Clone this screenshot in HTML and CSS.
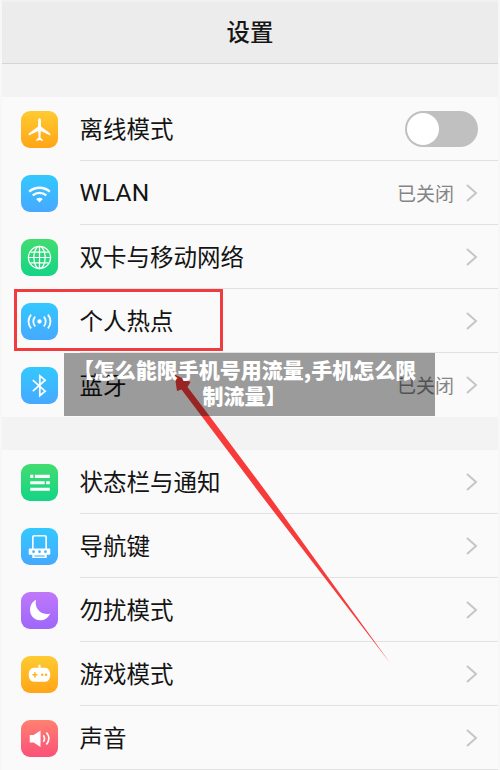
FILE: index.html
```html
<!DOCTYPE html>
<html lang="zh-CN">
<head>
<meta charset="utf-8">
<title>设置</title>
<link rel="stylesheet" href="styles.css">
</head>
<body>
<main class="screen">
  <header class="header"><h1 class="title">设置</h1></header>
  <section class="group">
    <div class="row">
      <span class="icon yellow"><svg viewBox="0 0 36 36"><path d="M18 7c1 0 1.400 1 1.400 2.500v5.500L28.500 22v1.800L19.300 19.500l-.4 6.500 2.300 2v1.200l-3.200-.9-3.200.9V28l2.300-2-.4-6.500L7.500 23.800V22L16.600 15V9.500C16.600 8 17 7 18 7z" fill="#fff"/></svg></span>
      <div class="body"><span class="label">离线模式</span><span class="toggle"><span class="knob"></span></span></div>
    </div>
    <div class="row">
      <span class="icon blue"><svg viewBox="0 0 36 36" fill="none" stroke="#fff" stroke-width="2.300"><path d="M8 16.200c5.800-5 14.200-5 20 0M11.400 19.900c3.900-3.300 9.300-3.300 13.200 0"/><path d="M14.800 23.300c2-1.500 4.400-1.500 6.400 0L18 26.800z" fill="#fff" stroke="none"/></svg></span>
      <div class="body"><span class="label latin">WLAN</span><span class="value">已关闭</span><svg class="chevron" viewBox="0 0 12 20"><path d="M1 2l9 8-9 8"/></svg></div>
    </div>
    <div class="row">
      <span class="icon green"><svg viewBox="0 0 36 36" fill="none" stroke="#fff" stroke-width="1.200"><circle cx="18" cy="18" r="10.800"/><ellipse cx="18" cy="18" rx="5.500" ry="10.800"/><path d="M18 7.200v21.600M7.200 18h21.600M9 12.800h18M9 23.200h18"/></svg></span>
      <div class="body"><span class="label">双卡与移动网络</span><svg class="chevron" viewBox="0 0 12 20"><path d="M1 2l9 8-9 8"/></svg></div>
    </div>
    <div class="row">
      <span class="icon blue"><svg viewBox="0 0 36 36" fill="none" stroke="#fff" stroke-width="1.800"><circle cx="18" cy="18" r="2.100" fill="#fff" stroke="none"/><path d="M13.800 13.300c-2.400 2.800-2.400 6.600 0 9.400M22.200 13.300c2.400 2.800 2.400 6.600 0 9.400M9.800 11.300c-3.300 4-3.300 9.400 0 13.400M26.200 11.300c3.300 4 3.300 9.400 0 13.400"/></svg></span>
      <div class="body"><span class="label">个人热点</span><svg class="chevron" viewBox="0 0 12 20"><path d="M1 2l9 8-9 8"/></svg></div>
    </div>
    <div class="row">
      <span class="icon blue"><svg viewBox="0 0 36 36" fill="none" stroke="#fff" stroke-width="1.700"><path d="M11.500 12.800l12 10.700-5.200 4.300V8.500l5.200 4.300-12 10.700"/></svg></span>
      <div class="body last"><span class="label">蓝牙</span><span class="value">已关闭</span><svg class="chevron" viewBox="0 0 12 20"><path d="M1 2l9 8-9 8"/></svg></div>
    </div>
  </section>
  <section class="group">
    <div class="row">
      <span class="icon green"><svg viewBox="0 0 36 36" fill="#fff"><path d="M9 10.500h3v3H9zM13.500 10.500H28v3H13.500zM9 16.800h14v3H9zM24.500 16.800H28v3h-3.500zM9 23h19v3H9z"/></svg></span>
      <div class="body"><span class="label">状态栏与通知</span><svg class="chevron" viewBox="0 0 12 20"><path d="M1 2l9 8-9 8"/></svg></div>
    </div>
    <div class="row">
      <span class="icon blue"><svg viewBox="0 0 36 36"><path d="M11.500 20.500V9q0-1.500 1.500-1.500h10q1.500 0 1.500 1.500v11.500" fill="none" stroke="#fff" stroke-width="1.600"/><path d="M8.500 20h19q1 0 1 1v4q0 1-1 1H25v3.300H11V26h-2.500q-1 0-1-1v-4q0-1 1-1z" fill="#fff"/><path d="M13 26.700h10v1.100H13z" fill="#3fb5ff"/><circle cx="12.200" cy="23" r="1.300" fill="#3fb5ff"/><circle cx="18" cy="23" r="1.300" fill="#3fb5ff"/><circle cx="23.800" cy="23" r="1.300" fill="#3fb5ff"/></svg></span>
      <div class="body"><span class="label">导航键</span><svg class="chevron" viewBox="0 0 12 20"><path d="M1 2l9 8-9 8"/></svg></div>
    </div>
    <div class="row">
      <span class="icon purple"><svg viewBox="0 0 36 36"><path d="M14.700 7.500C12.500 15 19 23.500 28.500 20.800 26.500 25.300 22.500 27.500 18.500 27.500 13 27.500 8.800 23 8.800 17.500 8.800 13 11 9.300 14.700 7.500z" fill="#fff"/></svg></span>
      <div class="body"><span class="label">勿扰模式</span><svg class="chevron" viewBox="0 0 12 20"><path d="M1 2l9 8-9 8"/></svg></div>
    </div>
    <div class="row">
      <span class="icon yellow"><svg viewBox="0 0 36 36"><path d="M17 8.500h2v3h4.500c3 0 5 3 5 6.700 0 4-2 6.800-5 6.800h-11c-3 0-5-2.800-5-6.800 0-3.700 2-6.700 5-6.700H17z" fill="#fff"/><path d="M11 18.300h5M13.500 15.800v5" stroke="#ffb51c" stroke-width="1.500"/><circle cx="20.700" cy="18.300" r="1.200" fill="#ffb51c"/><circle cx="24.300" cy="18.300" r="1.200" fill="#ffb51c"/></svg></span>
      <div class="body"><span class="label">游戏模式</span><svg class="chevron" viewBox="0 0 12 20"><path d="M1 2l9 8-9 8"/></svg></div>
    </div>
    <div class="row">
      <span class="icon coral"><svg viewBox="0 0 36 36"><path d="M8.500 14.500h3.800L19 10.300v15.900l-6.700-4.200H8.500z" fill="#fff"/><path d="M21.700 14.800c1.500 2 1.500 4.400 0 6.400M24.700 12.200c3.100 3.600 3.100 8 0 11.600" fill="none" stroke="#fff" stroke-width="1.600"/></svg></span>
      <div class="body"><span class="label">声音</span><svg class="chevron" viewBox="0 0 12 20"><path d="M1 2l9 8-9 8"/></svg></div>
    </div>
  </section>
  <div class="highlight"></div>
  <svg class="arrow" viewBox="0 0 500 770"><path d="M174.500 374.500L190.500 382 187.500 387 209.500 416 268.500 495 390.500 663.500 261 495 181.500 389.500 177 391z" fill="#f73a3a"/></svg>
  <div class="caption">【怎么能限手机号用流量,手机怎么限<br>制流量】</div>
</main>
</body>
</html>
```

FILE: styles.css
```css
* { box-sizing: border-box; }
body { margin: 0; font-family: "Noto Sans CJK SC", sans-serif; }
.screen {
  position: relative;
  width: 500px;
  height: 770px;
  overflow: hidden;
  background: #f3f3f3;
  border: 1px solid #f7f7f7;
  border-width: 0 2px;
}
.header {
  height: 64px;
  margin-bottom: 33px;
  display: flex;
  justify-content: center;
  background: #ececec;
  border-top: 2px solid #f1f1f1;
  border-bottom: 1px solid #d5d5d5;
}
.title {
  margin: 0;
  font-size: 23.400px;
  line-height: 58px;
  font-weight: 500;
  color: #161616;
}
.group { background: #fafafa; margin-bottom: 33px; }
.row { display: flex; align-items: center; height: 64px; padding-left: 19px; }
.icon { width: 37px; height: 37px; margin-right: 22px; border-radius: 9px; flex: none; }
.icon svg { display: block; width: 100%; height: 100%; }
.yellow { background: linear-gradient(#ffcb32, #ffa516); }
.blue { background: linear-gradient(#33c8ff, #46a9ff); }
.green { background: linear-gradient(#42dc70, #14d486); }
.purple { background: linear-gradient(#c078fa, #9d67fb); }
.coral { background: linear-gradient(#ff8170, #fb5078); }
.body {
  flex: 1;
  height: 64px;
  display: flex;
  align-items: center;
  padding-right: 20px;
  border-bottom: 1px solid #e1e1e1;
}
.last { border-bottom: 0; }
.label { flex: 1; padding-bottom: 2px; margin-left: -.5px; font-size: 23.500px; line-height: 36px; color: #141414; }
.latin { padding-bottom: 0; font-family: Roboto, sans-serif; font-size: 24.500px; letter-spacing: .4px; }
.value { font-size: 19px; line-height: 30px; color: #858585; margin-right: 12px; }
.chevron { width: 12px; height: 20px; fill: none; stroke: #c6c6c6; stroke-width: 2; }
.toggle { width: 73px; height: 36px; padding: 2px; border-radius: 18px; background: #c0c0c0; }
.knob { display: block; width: 32px; height: 32px; border-radius: 50%; background: #fff; }
.highlight {
  position: absolute;
  left: 12px;
  top: 289px;
  width: 209px;
  height: 62px;
  border: 3px solid #f03c3e;
}
.arrow { position: absolute; left: -2px; top: 0; width: 500px; height: 770px; }
.caption {
  position: absolute;
  left: 62px;
  top: 353px;
  width: 371px;
  height: 63px;
  padding: 3px 10px 0 0;
  background: rgba(0, 0, 0, .38);
  color: #fff;
  font-size: 21px;
  font-weight: 900;
  line-height: 26px;
  text-align: center;
  white-space: nowrap;
}
```
